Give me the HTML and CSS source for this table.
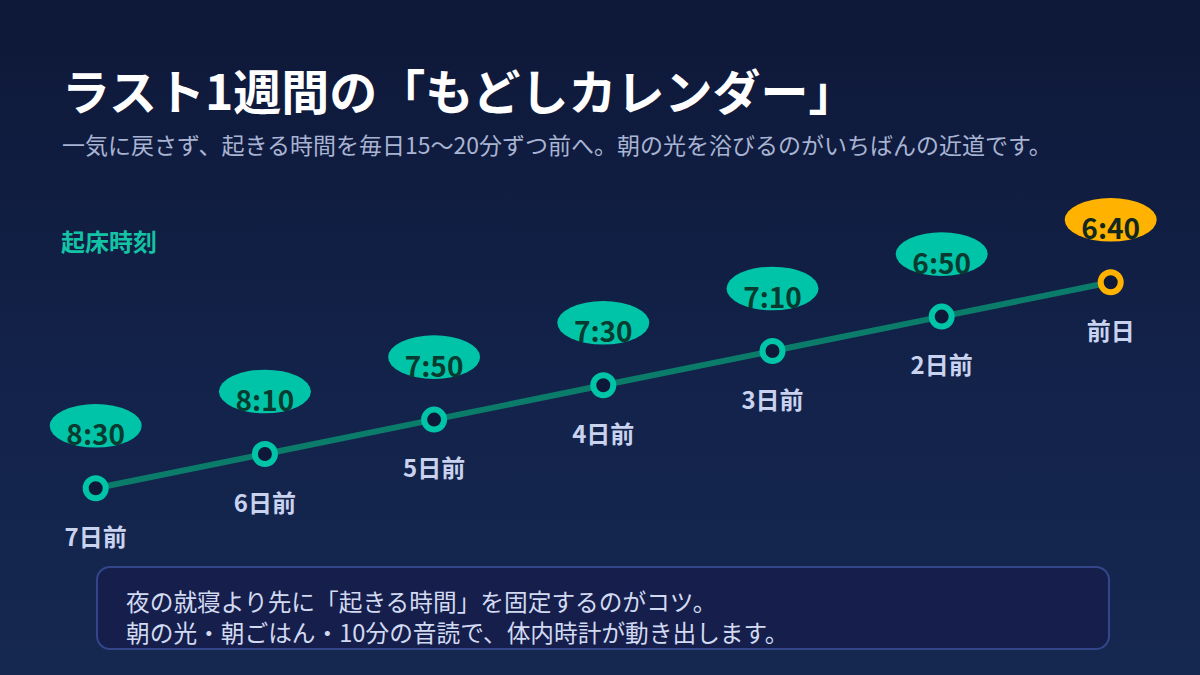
FILE: index.html
```html
<!DOCTYPE html>
<html lang="ja">
<head>
<meta charset="utf-8">
<title>もどしカレンダー</title>
<link rel="stylesheet" href="styles.css">
</head>
<body>
<div class="slide">
  <header class="head">
    <h1 class="title">ラスト1週間の「もどしカレンダー」</h1>
    <p class="sub">一気に戻さず、起きる時間を毎日15～20分ずつ前へ。朝の光を浴びるのがいちばんの近道です。</p>
  </header>
  <svg class="chart" width="1200" height="400" viewBox="0 160 1200 400" xmlns="http://www.w3.org/2000/svg">
    <text class="axis" x="61" y="251">起床時刻</text>
    <polyline class="line" points="95.7,488.3 264.9,454 434.1,419.6 603.3,385.3 772.5,351 941.7,316.6 1110.7,282.3"/>

    <g class="pt">
      <ellipse class="bub" cx="95.7" cy="425.8" rx="46" ry="21.8"/>
      <text class="time" x="95.7" y="445.3">8:30</text>
      <circle class="dot" cx="95.7" cy="488.3" r="10"/>
      <text class="day" x="95.7" y="545.8">7日前</text>
    </g>
    <g class="pt">
      <ellipse class="bub" cx="264.9" cy="391.5" rx="46" ry="21.8"/>
      <text class="time" x="264.9" y="411">8:10</text>
      <circle class="dot" cx="264.9" cy="454" r="10"/>
      <text class="day" x="264.9" y="511.5">6日前</text>
    </g>
    <g class="pt">
      <ellipse class="bub" cx="434.1" cy="357.1" rx="46" ry="21.8"/>
      <text class="time" x="434.1" y="376.6">7:50</text>
      <circle class="dot" cx="434.1" cy="419.6" r="10"/>
      <text class="day" x="434.1" y="477.1">5日前</text>
    </g>
    <g class="pt">
      <ellipse class="bub" cx="603.3" cy="322.8" rx="46" ry="21.8"/>
      <text class="time" x="603.3" y="342.3">7:30</text>
      <circle class="dot" cx="603.3" cy="385.3" r="10"/>
      <text class="day" x="603.3" y="442.8">4日前</text>
    </g>
    <g class="pt">
      <ellipse class="bub" cx="772.5" cy="288.5" rx="46" ry="21.8"/>
      <text class="time" x="772.5" y="308">7:10</text>
      <circle class="dot" cx="772.5" cy="351" r="10"/>
      <text class="day" x="772.5" y="408.5">3日前</text>
    </g>
    <g class="pt">
      <ellipse class="bub" cx="941.7" cy="254.1" rx="46" ry="21.8"/>
      <text class="time" x="941.7" y="273.6">6:50</text>
      <circle class="dot" cx="941.7" cy="316.6" r="10"/>
      <text class="day" x="941.7" y="374.1">2日前</text>
    </g>
    <g class="pt pt-last">
      <ellipse class="bub" cx="1110.7" cy="219.8" rx="46" ry="21.8"/>
      <text class="time" x="1110.7" y="239.3">6:40</text>
      <circle class="dot" cx="1110.7" cy="282.3" r="10"/>
      <text class="day" x="1110.7" y="339.8">前日</text>
    </g>
  </svg>
  <div class="note">
    <p class="note-line">夜の就寝より先に「起きる時間」を固定するのがコツ。</p>
    <p class="note-line">朝の光・朝ごはん・10分の音読で、体内時計が動き出します。</p>
  </div>
</div>
</body>
</html>
```

FILE: styles.css
```css
* { box-sizing: border-box; }
html, body { margin: 0; padding: 0; }
body {
  font-family: "Noto Sans CJK JP", "Noto Sans", sans-serif;
  background: #0f1a3a;
}
.slide {
  width: 1200px;
  height: 675px;
  overflow: hidden;
  background: linear-gradient(180deg, #0e1838 0%, #13234b 60%, #15284f 100%);
}
.head {
  height: 160px;
  padding: 60px 62px 0;
}
.title {
  margin: 0;
  font-size: 48px;
  line-height: 58px;
  font-weight: 700;
  color: #ffffff;
  white-space: nowrap;
}
.sub {
  margin: 10px 0 0;
  font-size: 23px;
  line-height: 32px;
  color: #a9b4d3;
  white-space: nowrap;
}
.chart {
  display: block;
  width: 1200px;
  height: 400px;
}
.axis {
  font-family: "Noto Sans CJK JP", sans-serif;
  font-size: 24px;
  font-weight: 700;
  fill: #14c3a5;
}
.line {
  fill: none;
  stroke: #0b7b6a;
  stroke-width: 6;
  stroke-linecap: round;
  stroke-linejoin: round;
}
.bub { fill: #00c4a7; }
.time {
  font-family: "Noto Sans CJK JP", sans-serif;
  font-size: 28px;
  font-weight: 700;
  fill: #083a30;
  text-anchor: middle;
}
.dot {
  fill: #0e1838;
  stroke: #00c4a7;
  stroke-width: 6;
}
.day {
  font-family: "Noto Sans CJK JP", sans-serif;
  font-size: 24px;
  font-weight: 700;
  fill: #c9d3ef;
  text-anchor: middle;
}
.pt-last .bub { fill: #ffb300; }
.pt-last .dot { stroke: #ffb300; }
.pt-last .time { fill: #12281f; }
.note {
  margin: 6px 0 0 96px;
  width: 1014px;
  height: 84px;
  padding: 18px 0 0 28px;
  border: 2px solid #33468a;
  border-radius: 14px;
  background: #161f4b;
  overflow: hidden;
}
.note-line {
  margin: 0;
  font-size: 23.7px;
  line-height: 31px;
  color: #d2daf2;
  white-space: nowrap;
}
```
